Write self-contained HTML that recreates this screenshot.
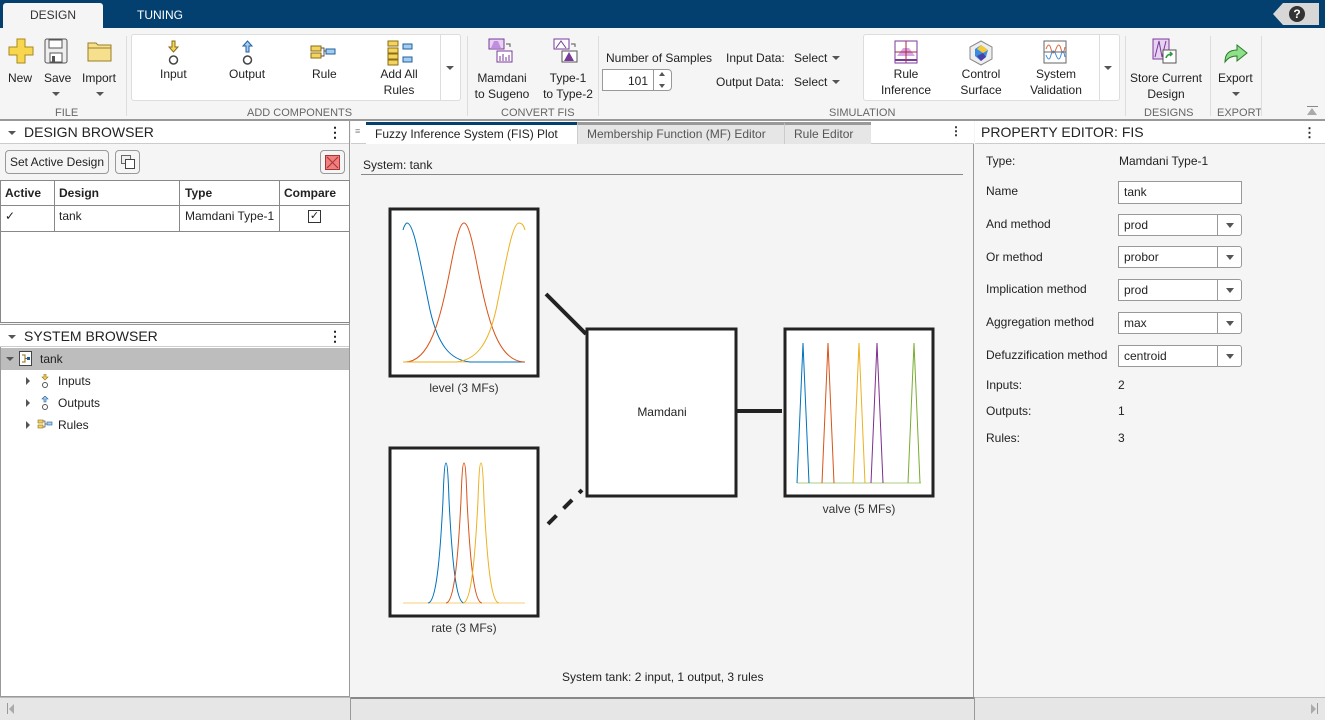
<!DOCTYPE html>
<html><head><meta charset="utf-8"><style>
*{box-sizing:border-box;margin:0;padding:0}
body{width:1325px;height:720px;overflow:hidden;background:#f5f5f5;font-family:"Liberation Sans",sans-serif;font-size:12px;color:#222;position:relative}
.a{position:absolute}
.c{text-align:center}
.lbl{font-size:12px;color:#222;line-height:16px}
.sec{font-size:11px;color:#666;position:absolute;top:107px}
.sep{position:absolute;top:36px;width:1px;height:80px;background:#ddd}
.hdr{position:absolute;height:23px;background:#fff;border-bottom:1px solid #ccc;font-size:14px;line-height:23px}
.dd{position:absolute;left:1118px;width:124px;height:22px;border:1px solid #999;background:#fff;font-size:12px;line-height:20px;padding-left:5px;border-radius:0 3px 3px 0}
.dd:after{content:"";position:absolute;right:0;top:0;width:23px;height:20px;border-left:1px solid #999}
.dd i{position:absolute;right:7px;top:8px;border-left:4px solid transparent;border-right:4px solid transparent;border-top:5px solid #555;z-index:2}
.pl{position:absolute;left:986px;font-size:12px}
.arr{display:block;width:0;height:0;border-left:4px solid transparent;border-right:4px solid transparent;border-top:4px solid #555}
</style></head><body>
<!-- top bar -->
<div class="a" style="left:0;top:0;width:1325px;height:28px;background:#03406f"></div>
<div class="a c" style="left:3px;top:3px;width:100px;height:25px;background:#f5f5f5;border-radius:3px 3px 0 0;font-size:12px;line-height:25px;color:#333">DESIGN</div>
<div class="a c" style="left:110px;top:3px;width:100px;height:25px;font-size:12px;line-height:25px;color:#fff">TUNING</div>
<div class="a" style="left:1273px;top:3px;width:46px;height:22px;background:#d7d7d7;clip-path:polygon(10px 0,100% 0,100% 100%,10px 100%,0 50%)"></div>
<div class="a c" style="left:1289px;top:6px;width:16px;height:16px;border-radius:50%;background:#333;color:#fff;font-weight:bold;font-size:12px;line-height:16px">?</div>

<!-- toolbar -->
<svg class="a" style="left:8px;top:38px" width="26" height="26"><path d="M9 1h8v8h8v8h-8v8H9v-8H1V9h8z" fill="#f8d64e" stroke="#a8891d"/></svg>
<div class="a lbl" style="left:8px;top:70px">New</div>
<svg class="a" style="left:44px;top:38px" width="24" height="26"><rect x="1" y="1" width="22" height="24" rx="2" fill="#eee" stroke="#555"/><rect x="5" y="2" width="13" height="8" fill="#fff" stroke="#555"/><rect x="6" y="15" width="12" height="9" fill="#fff" stroke="#555"/><rect x="8" y="18" width="3" height="6" fill="#555"/></svg>
<div class="a lbl" style="left:44px;top:70px">Save</div><div class="a" style="left:52px;top:92px"><span class="arr"></span></div>
<svg class="a" style="left:87px;top:40px" width="26" height="22"><path d="M1 3h8l2 2h13v16H1z" fill="#f6e08e" stroke="#9b7e26"/><path d="M1 8h23" stroke="#9b7e26"/></svg>
<div class="a lbl" style="left:82px;top:70px">Import</div><div class="a" style="left:96px;top:92px"><span class="arr"></span></div>
<div class="sec" style="left:55px">FILE</div>
<div class="sep" style="left:126px"></div>

<div class="a" style="left:131px;top:34px;width:330px;height:67px;background:#fff;border:1px solid #ddd;border-radius:3px"></div>
<div class="a" style="left:440px;top:35px;width:1px;height:65px;background:#ddd"></div>
<div class="a" style="left:446px;top:66px"><span class="arr"></span></div>
<svg class="a" style="left:166px;top:40px" width="16" height="26"><path d="M6 1h3v6h3l-4.5 5L3 7h3z" fill="#f4d35e" stroke="#8b6d12"/><circle cx="7.5" cy="20" r="4" fill="none" stroke="#444" stroke-width="1.5"/></svg>
<div class="a lbl" style="left:160px;top:66px">Input</div>
<svg class="a" style="left:240px;top:40px" width="16" height="26"><path d="M6 12V6H3l4.5-5L12 6H9v6z" fill="#a5cdf0" stroke="#1d5f9e"/><circle cx="7.5" cy="20" r="4" fill="none" stroke="#444" stroke-width="1.5"/></svg>
<div class="a lbl" style="left:229px;top:66px">Output</div>
<svg class="a" style="left:310px;top:44px" width="26" height="16"><rect x="1" y="2" width="10" height="5" fill="#f4d35e" stroke="#8b6d12"/><rect x="1" y="9" width="10" height="5" fill="#f4d35e" stroke="#8b6d12"/><rect x="16" y="5" width="9" height="5" fill="#a5cdf0" stroke="#1d5f9e"/><path d="M11 4h3v8h-3M14 7h2" stroke="#555" fill="none"/></svg>
<div class="a lbl" style="left:312px;top:66px">Rule</div>
<svg class="a" style="left:387px;top:40px" width="26" height="26"><rect x="1" y="1" width="10" height="5" fill="#f4d35e" stroke="#8b6d12"/><rect x="1" y="8" width="10" height="5" fill="#f4d35e" stroke="#8b6d12"/><rect x="16" y="4" width="9" height="5" fill="#a5cdf0" stroke="#1d5f9e"/><rect x="1" y="14" width="10" height="5" fill="#f4d35e" stroke="#8b6d12"/><rect x="1" y="20" width="10" height="5" fill="#f4d35e" stroke="#8b6d12"/><rect x="16" y="17" width="9" height="5" fill="#a5cdf0" stroke="#1d5f9e"/></svg>
<div class="a lbl c" style="left:372px;top:66px;width:54px">Add All<br>Rules</div>
<div class="sec" style="left:247px">ADD COMPONENTS</div>
<div class="sep" style="left:467px"></div>

<svg class="a" style="left:488px;top:38px" width="26" height="26"><rect x="1" y="1" width="15" height="10" fill="#e8d3f3" stroke="#7a3a9a"/><path d="M3 10l3-7 4 0 3 7" fill="#c28ee0"/><path d="M18 6h4v3" stroke="#555" fill="none"/><rect x="9" y="13" width="15" height="11" fill="#fff" stroke="#7a3a9a"/><path d="M12 23v-5M15 23v-7M18 23v-4M21 23v-6" stroke="#7a3a9a"/></svg>
<div class="a lbl c" style="left:472px;top:70px;width:60px">Mamdani<br>to Sugeno</div>
<svg class="a" style="left:553px;top:38px" width="26" height="26"><rect x="1" y="1" width="15" height="10" fill="#fff" stroke="#7a3a9a"/><path d="M3 10l5-7 5 7" fill="none" stroke="#7a3a9a"/><path d="M18 6h4v3" stroke="#555" fill="none"/><rect x="9" y="13" width="15" height="11" fill="#fff" stroke="#555"/><path d="M11 23l5-9 5 9z" fill="#7a3a9a"/></svg>
<div class="a lbl c" style="left:538px;top:70px;width:60px">Type-1<br>to Type-2</div>
<div class="sec" style="left:501px">CONVERT FIS</div>
<div class="sep" style="left:598px"></div>

<div class="a lbl" style="left:606px;top:50px">Number of Samples</div>
<div class="a" style="left:602px;top:69px;width:70px;height:22px;border:1px solid #999;background:#fff;border-radius:0 4px 4px 0"></div>
<div class="a lbl" style="left:628px;top:73px">101</div>
<div class="a" style="left:653px;top:69px;width:1px;height:22px;background:#999"></div>
<div class="a" style="left:659px;top:72px;border-left:3px solid transparent;border-right:3px solid transparent;border-bottom:4px solid #555"></div>
<div class="a" style="left:659px;top:84px;border-left:3px solid transparent;border-right:3px solid transparent;border-top:4px solid #555"></div>
<div class="a lbl" style="left:726px;top:50px">Input Data:</div>
<div class="a lbl" style="left:794px;top:50px">Select</div><div class="a" style="left:832px;top:56px"><span class="arr"></span></div>
<div class="a lbl" style="left:716px;top:74px">Output Data:</div>
<div class="a lbl" style="left:794px;top:74px">Select</div><div class="a" style="left:832px;top:80px"><span class="arr"></span></div>

<div class="a" style="left:863px;top:34px;width:257px;height:67px;background:#fff;border:1px solid #ddd;border-radius:3px"></div>
<div class="a" style="left:1099px;top:35px;width:1px;height:65px;background:#ddd"></div>
<div class="a" style="left:1104px;top:66px"><span class="arr"></span></div>
<svg class="a" style="left:894px;top:40px" width="24" height="24"><rect x="1" y="1" width="22" height="22" fill="#fff" stroke="#7a3a9a"/><path d="M3 16l6-8 6 0 6 8z" fill="#d4a6e8"/><path d="M1 12h22M12 1v22" stroke="#b0243a"/><path d="M1 20h22" stroke="#7a3a9a" stroke-width="2"/></svg>
<div class="a lbl c" style="left:876px;top:66px;width:60px">Rule<br>Inference</div>
<svg class="a" style="left:968px;top:40px" width="26" height="26"><path d="M13 1l11 6v12l-11 6-11-6V7z" fill="#eee" stroke="#888"/><path d="M13 5l7 5-2 7-5 4-6-5 0-7z" fill="#3a8dde"/><path d="M13 5l7 5-5 3-6-4z" fill="#f5c93a"/><path d="M9 16l4 5 5-4-3-4z" fill="#4a3fa8"/></svg>
<div class="a lbl c" style="left:951px;top:66px;width:60px">Control<br>Surface</div>
<svg class="a" style="left:1043px;top:40px" width="24" height="24"><rect x="1" y="1" width="22" height="22" fill="#fff" stroke="#666"/><path d="M1 12h22" stroke="#666"/><path d="M3 9q3-8 5 0t5 0 5 0 4-2" fill="none" stroke="#e0663a"/><path d="M3 15q3 8 5 0t5 0 5 0 4 2" fill="none" stroke="#3a8dde"/></svg>
<div class="a lbl c" style="left:1026px;top:66px;width:60px">System<br>Validation</div>
<div class="sec" style="left:829px">SIMULATION</div>
<div class="sep" style="left:1125px"></div>

<svg class="a" style="left:1152px;top:38px" width="26" height="28"><rect x="1" y="1" width="16" height="20" fill="#e8d3f3" stroke="#7a3a9a"/><path d="M3 19l4-16 3 16 4-16" fill="none" stroke="#7a3a9a"/><rect x="11" y="12" width="13" height="13" fill="#fff" stroke="#555"/><path d="M14 20q1-4 6-4M18 14l2 2-2 2" fill="none" stroke="#2a9a3a" stroke-width="1.5"/></svg>
<div class="a lbl c" style="left:1127px;top:70px;width:78px">Store Current<br>Design</div>
<div class="sec" style="left:1144px">DESIGNS</div>
<div class="sep" style="left:1210px"></div>
<svg class="a" style="left:1223px;top:40px" width="26" height="24"><path d="M2 22q0-12 12-12V5l10 8-10 8v-5q-8 0-12 6z" fill="#8fe08a" stroke="#2a7a2a"/></svg>
<div class="a lbl" style="left:1218px;top:70px">Export</div><div class="a" style="left:1232px;top:92px"><span class="arr"></span></div>
<div class="sec" style="left:1217px">EXPORT</div>
<div class="sep" style="left:1261px"></div>
<div class="a" style="left:1307px;top:106px;width:11px;height:1px;background:#888"></div>
<div class="a" style="left:1307px;top:108px;border-left:5px solid transparent;border-right:5px solid transparent;border-bottom:7px solid #aaa"></div>
<div class="a" style="left:0;top:119px;width:1325px;height:2px;background:#999"></div>

<!-- left panel -->
<div class="a" style="left:0;top:121px;width:350px;height:576px;background:#f5f5f5;border-right:1px solid #999"></div>
<div class="hdr" style="left:0;top:121px;width:349px"><span style="position:absolute;left:8px;top:10px" class="arr"></span><span style="position:absolute;left:24px">DESIGN BROWSER</span><span style="position:absolute;left:328px;font-weight:bold">⋮</span></div>
<div class="a" style="left:5px;top:150px;width:104px;height:24px;border:1px solid #999;border-radius:4px;background:#f5f5f5;font-size:12px;line-height:22px;text-align:center">Set Active Design</div>
<div class="a" style="left:115px;top:150px;width:25px;height:24px;border:1px solid #999;border-radius:4px"></div>
<div class="a" style="left:121px;top:155px;width:10px;height:9px;border:1px solid #666;background:#eee"></div>
<div class="a" style="left:125px;top:159px;width:10px;height:10px;border:1px solid #444;background:#fff"></div>
<div class="a" style="left:320px;top:150px;width:25px;height:24px;border:1px solid #999;border-radius:4px"></div>
<div class="a" style="left:325px;top:155px;width:15px;height:15px;border:1px solid #a33;background:#f08080"></div>
<svg class="a" style="left:326px;top:156px" width="13" height="13"><path d="M1 1l11 11M12 1L1 12" stroke="#a33"/></svg>
<div class="a" style="left:0;top:180px;width:350px;height:143px;background:#fff;border:1px solid #888"></div>
<div class="a" style="left:1px;top:181px;width:348px;height:25px;border-bottom:1px solid #888;font-weight:bold;font-size:12px;line-height:25px"><span class="a" style="left:4px">Active</span><span class="a" style="left:58px">Design</span><span class="a" style="left:184px">Type</span><span class="a" style="left:283px">Compare</span></div>
<div class="a" style="left:1px;top:206px;width:348px;height:26px;border-bottom:1px solid #888;font-size:12px;line-height:20px"><span class="a" style="left:4px">✓</span><span class="a" style="left:58px">tank</span><span class="a" style="left:184px">Mamdani Type-1</span></div>
<div class="a" style="left:54px;top:181px;width:1px;height:51px;background:#888"></div>
<div class="a" style="left:179px;top:181px;width:1px;height:51px;background:#888"></div>
<div class="a" style="left:279px;top:181px;width:1px;height:51px;background:#888"></div>
<div class="a" style="left:308px;top:210px;width:13px;height:13px;border:1px solid #333;font-size:11px;line-height:11px;text-align:center">✓</div>
<div class="hdr" style="left:0;top:324px;width:349px;border-top:1px solid #999"><span style="position:absolute;left:8px;top:10px" class="arr"></span><span style="position:absolute;left:24px">SYSTEM BROWSER</span><span style="position:absolute;left:328px;font-weight:bold">⋮</span></div>
<div class="a" style="left:0;top:347px;width:350px;height:350px;background:#fff;border:1px solid #999;border-top:none"></div>
<div class="a" style="left:1px;top:348px;width:348px;height:22px;background:#bdbdbd"></div>
<div class="a" style="left:6px;top:357px"><span class="arr"></span></div>
<svg class="a" style="left:19px;top:351px" width="13" height="15"><rect x=".5" y=".5" width="12" height="14" fill="#fff" stroke="#444"/><path d="M3 4h3v7H3M6 7.5h2" stroke="#8b6d12" fill="none"/><rect x="8" y="6" width="3" height="3" fill="#1d5f9e"/></svg>
<div class="a lbl" style="left:40px;top:351px">tank</div>
<div class="a" style="left:26px;top:377px;border-top:4px solid transparent;border-bottom:4px solid transparent;border-left:4px solid #555"></div>
<div class="a" style="left:26px;top:399px;border-top:4px solid transparent;border-bottom:4px solid transparent;border-left:4px solid #555"></div>
<div class="a" style="left:26px;top:421px;border-top:4px solid transparent;border-bottom:4px solid transparent;border-left:4px solid #555"></div>
<svg class="a" style="left:40px;top:374px" width="10" height="15"><path d="M4 0h2v3h2l-3 3-3-3h2z" fill="#f4d35e" stroke="#8b6d12" stroke-width=".6"/><circle cx="5" cy="11" r="2.5" fill="none" stroke="#555"/></svg>
<svg class="a" style="left:40px;top:396px" width="10" height="15"><path d="M4 6V3H2l3-3 3 3H6v3z" fill="#a5cdf0" stroke="#1d5f9e" stroke-width=".6"/><circle cx="5" cy="11" r="2.5" fill="none" stroke="#555"/></svg>
<svg class="a" style="left:37px;top:419px" width="16" height="10"><rect x="1" y="1" width="5" height="3" fill="#f4d35e" stroke="#8b6d12" stroke-width=".6"/><rect x="1" y="6" width="5" height="3" fill="#f4d35e" stroke="#8b6d12" stroke-width=".6"/><rect x="10" y="3" width="5" height="3" fill="#a5cdf0" stroke="#1d5f9e" stroke-width=".6"/><path d="M6 2h2v6H6M8 5h2" stroke="#555" fill="none" stroke-width=".8"/></svg>
<div class="a lbl" style="left:58px;top:373px">Inputs</div>
<div class="a lbl" style="left:58px;top:395px">Outputs</div>
<div class="a lbl" style="left:58px;top:417px">Rules</div>

<!-- center -->
<div class="a" style="left:351px;top:121px;width:623px;height:576px;background:#f4f4f4;border-right:1px solid #999"></div>
<div class="a" style="left:351px;top:121px;width:623px;height:23px;background:#fff;border-bottom:1px solid #ccc"></div>
<div class="a" style="left:366px;top:122px;width:211px;height:22px;background:#fff;border-top:3px solid #03406f;font-size:12px;line-height:19px;padding-left:9px">Fuzzy Inference System (FIS) Plot</div>
<div class="a" style="left:577px;top:122px;width:207px;height:22px;background:#e6e6e6;border-top:3px solid #999;border-left:1px solid #ccc;font-size:12px;line-height:19px;padding-left:9px;color:#555">Membership Function (MF) Editor</div>
<div class="a" style="left:784px;top:122px;width:87px;height:22px;background:#e6e6e6;border-top:3px solid #999;border-left:1px solid #ccc;font-size:12px;line-height:19px;padding-left:9px;color:#555">Rule Editor</div>
<div class="a" style="left:950px;top:124px;font-weight:bold">⋮</div>
<div class="a" style="left:355px;top:126px;color:#888;font-size:9px">≡</div>
<div class="a lbl" style="left:363px;top:157px">System: tank</div>
<div class="a" style="left:361px;top:174px;width:602px;height:1px;background:#888"></div>

<svg class="a" style="left:351px;top:180px" width="623" height="480">
<g transform="translate(-351,-180)">
<rect x="390" y="209" width="148" height="167" fill="#fff" stroke="#222" stroke-width="3"/>
<rect x="390" y="448" width="148" height="168" fill="#fff" stroke="#222" stroke-width="3"/>
<rect x="587" y="329" width="149" height="167" fill="#fff" stroke="#222" stroke-width="3"/>
<rect x="785" y="329" width="148" height="167" fill="#fff" stroke="#222" stroke-width="3"/>
<path d="M546 294L586 334" stroke="#222" stroke-width="4"/>
<path d="M548 524L582 490" stroke="#222" stroke-width="4" stroke-dasharray="12,10"/>
<path d="M737 411H782" stroke="#222" stroke-width="4"/>
<g fill="none" stroke-width="1">
<path d="M403 362H525" stroke="#edb120" opacity=".6"/>
<path d="M403 230C404 226 406 223 407 223C414 223 420 262 430 310C438 345 450 360 470 362H525" stroke="#0072bd"/>
<path d="M405 362C430 362 440 320 450 270C456 238 460 223 464 223C468 223 472 238 478 270C488 320 498 362 525 362" stroke="#d95319"/>
<path d="M525 230C524 226 522 223 519 223C512 223 506 262 496 310C488 345 476 360 456 362H403" stroke="#edb120"/>
<path d="M403 603H525" stroke="#edb120" opacity=".6"/>
<path d="M428 603C436 603 440 560 443 500C444 470 445 463 446 463C447 463 448 470 449 500C452 560 456 603 464 603" stroke="#0072bd"/>
<path d="M446 603C454 603 458 560 461 500C462 470 463 463 464 463C465 463 466 470 467 500C470 560 474 603 482 603" stroke="#d95319"/>
<path d="M463 603C471 603 475 560 478 500C479 470 480 463 481 463C482 463 483 470 484 500C487 560 491 603 499 603" stroke="#edb120"/>
<path d="M797 483H921" stroke="#77ac30" opacity=".6"/>
<path d="M797 483L803 343L809 483" stroke="#0072bd"/>
<path d="M822 483L828 343L834 483" stroke="#d95319"/>
<path d="M853 483L859 343L865 483" stroke="#edb120"/>
<path d="M871 483L877 343L883 483" stroke="#7e2f8e"/>
<path d="M908 483L914 343L920 483" stroke="#77ac30"/>
</g>
<text x="662" y="416" font-family="Liberation Sans" font-size="12" fill="#222" text-anchor="middle">Mamdani</text>
<text x="464" y="392" font-family="Liberation Sans" font-size="12" fill="#333" text-anchor="middle">level (3 MFs)</text>
<text x="464" y="632" font-family="Liberation Sans" font-size="12" fill="#333" text-anchor="middle">rate (3 MFs)</text>
<text x="859" y="513" font-family="Liberation Sans" font-size="12" fill="#333" text-anchor="middle">valve (5 MFs)</text>
</g></svg>
<div class="a lbl" style="left:562px;top:669px">System tank: 2 input, 1 output, 3 rules</div>

<!-- right -->
<div class="hdr" style="left:975px;top:121px;width:350px"><span style="position:absolute;left:6px">PROPERTY EDITOR: FIS</span><span style="position:absolute;left:328px;font-weight:bold;font-size:13px">⋮</span></div>
<div class="pl" style="top:154px">Type:</div><div class="pl" style="left:1119px;top:154px">Mamdani Type-1</div>
<div class="pl" style="top:184px">Name</div>
<div class="a" style="left:1118px;top:181px;width:124px;height:23px;border:1px solid #999;background:#fff;font-size:12px;line-height:20px;padding-left:5px">tank</div>
<div class="pl" style="top:217px">And method</div><div class="dd" style="top:214px">prod<i></i></div>
<div class="pl" style="top:250px">Or method</div><div class="dd" style="top:246px">probor<i></i></div>
<div class="pl" style="top:282px">Implication method</div><div class="dd" style="top:279px">prod<i></i></div>
<div class="pl" style="top:315px">Aggregation method</div><div class="dd" style="top:312px">max<i></i></div>
<div class="pl" style="top:348px">Defuzzification method</div><div class="dd" style="top:345px">centroid<i></i></div>
<div class="pl" style="top:378px">Inputs:</div><div class="pl" style="left:1118px;top:378px">2</div>
<div class="pl" style="top:404px">Outputs:</div><div class="pl" style="left:1118px;top:404px">1</div>
<div class="pl" style="top:431px">Rules:</div><div class="pl" style="left:1118px;top:431px">3</div>

<!-- bottom bar -->
<div class="a" style="left:0;top:697px;width:1325px;height:23px;background:#e6e6e6;border-top:1px solid #bbb"></div>
<div class="a" style="left:351px;top:697px;width:623px;height:2px;background:#888"></div>
<div class="a" style="left:350px;top:697px;width:1px;height:23px;background:#999"></div>
<div class="a" style="left:974px;top:697px;width:1px;height:23px;background:#999"></div>
<div class="a" style="left:7px;top:703px;width:1px;height:11px;background:#999"></div>
<div class="a" style="left:9px;top:704px;border-top:5px solid transparent;border-bottom:5px solid transparent;border-right:5px solid #aaa"></div>
<div class="a" style="left:1317px;top:703px;width:1px;height:11px;background:#999"></div>
<div class="a" style="left:1311px;top:704px;border-top:5px solid transparent;border-bottom:5px solid transparent;border-left:5px solid #aaa"></div>
</body></html>
